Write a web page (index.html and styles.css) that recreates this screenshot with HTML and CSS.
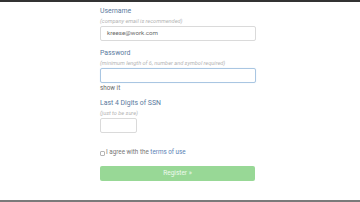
FILE: index.html
```html
<!DOCTYPE html>
<html>
<head>
<meta charset="utf-8">
<link rel="stylesheet" href="styles.css">
</head>
<body>
<div class="topbar"></div>
<main class="page">
  <form class="form">
    <div class="field user">
      <label class="label">Username</label>
      <div class="hint">(company email is recommended)</div>
      <div class="input wide">kreese@work.com</div>
    </div>
    <div class="field pass">
      <label class="label">Password</label>
      <div class="hint">(minimum length of 6, number and symbol required)</div>
      <div class="input wide focus"></div>
      <div class="show">show it</div>
    </div>
    <div class="field ssn">
      <label class="label">Last 4 Digits of SSN</label>
      <div class="hint">(just to be sure)</div>
      <div class="input short"></div>
    </div>
    <div class="agree">
      <span class="check"></span>
      <span>I agree with the <span class="link">terms of use</span></span>
    </div>
    <div class="button">Register »</div>
  </form>
</main>
<div class="bottombar"></div>
</body>
</html>
```
FILE: styles.css
```css
html, body {
  margin: 0;
  padding: 0;
  background: #ffffff;
  width: 360px;
  height: 202px;
  overflow: hidden;
  font-family: Roboto, "Liberation Sans", sans-serif;
}
body {
  display: flex;
  flex-direction: column;
}
.topbar {
  height: 2px;
  background: #333333;
  flex: none;
}
.page {
  flex: 1;
  display: flex;
  justify-content: flex-start;
  padding-left: 100px;
}
.form {
  width: 156px;
  display: flex;
  flex-direction: column;
  padding-top: 5px;
}
.field {
  display: flex;
  flex-direction: column;
}
.user { margin-bottom: 8px; }
.pass { margin-bottom: 5px; }
.ssn { margin-bottom: 15px; }
.label {
  font-size: 6.9px;
  line-height: 9px;
  color: #5a7a9e;
  font-weight: 400;
}
.hint {
  font-size: 5.6px;
  line-height: 8px;
  font-style: italic;
  color: #b4b4b4;
  margin-top: 1px;
  margin-bottom: 1px;
}
.input {
  box-sizing: border-box;
  height: 15px;
  border: 1px solid #dadada;
  border-radius: 2px;
  font-size: 6.2px;
  line-height: 13px;
  padding-left: 6px;
  color: #6a6a6a;
}
.input.wide { width: 156px; }
.input.focus { border-color: #a9c6e2; box-shadow: 0 0 1px #c9dcef; }
.input.short { width: 37px; }
.show {
  font-size: 6.3px;
  line-height: 9px;
  color: #6a6a6a;
  margin-top: 1px;
  margin-bottom: 1px;
}
.agree {
  display: flex;
  align-items: center;
  gap: 1px;
  font-size: 6.3px;
  line-height: 9px;
  color: #777;
}
.check {
  width: 3px;
  height: 3px;
  margin-top: 1px;
  border: 1px solid #b5b5b5;
  border-radius: 1px;
}
.link { color: #5a82b5; }
.button {
  margin-top: 9px;
  height: 15px;
  width: 155px;
  background: #98d896;
  border-radius: 2px;
  color: #eef9ee;
  font-size: 6.5px;
  line-height: 15px;
  text-align: center;
}
.bottombar {
  height: 2px;
  background: #7a7a7a;
  flex: none;
}
```
